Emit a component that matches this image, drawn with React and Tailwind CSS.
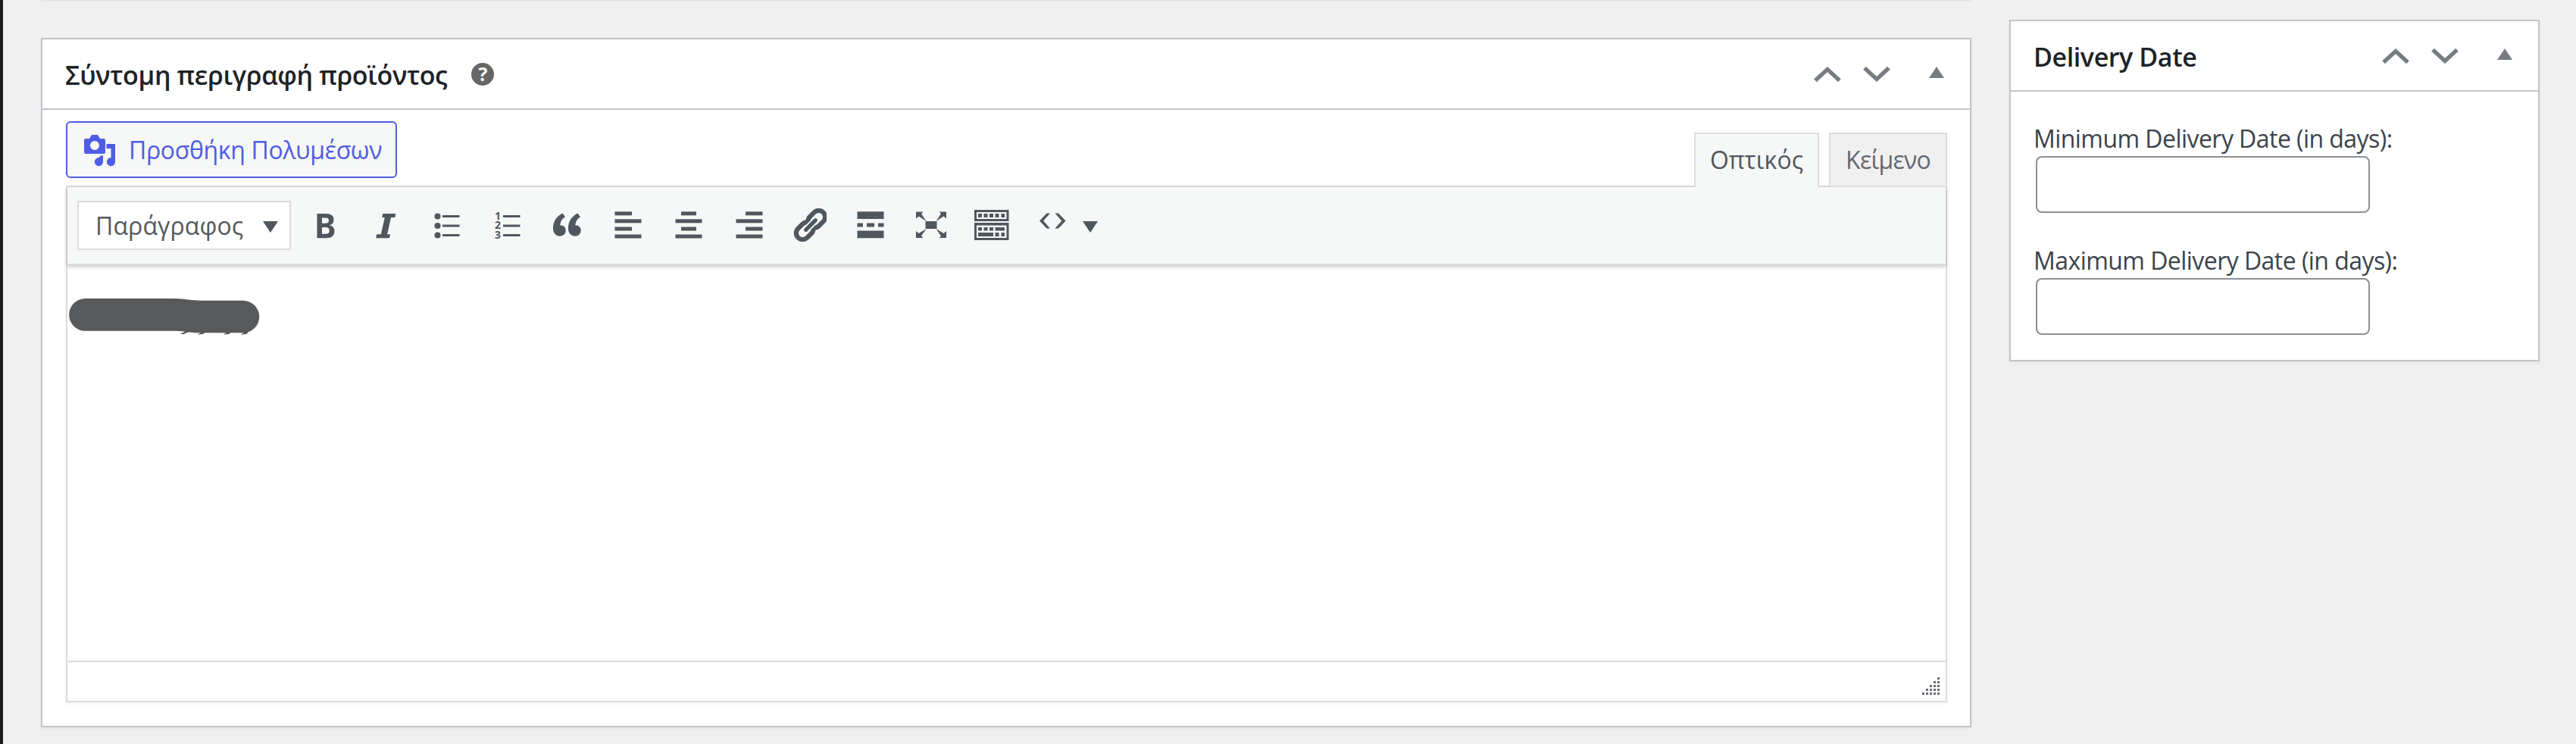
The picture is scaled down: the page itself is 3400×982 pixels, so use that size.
const font = 'font-["Open_Sans","Noto_Sans",sans-serif]';

function Sort() {
  return (
    <div className="flex items-start text-[#787c82]">
      <svg className="h-[20px] w-[36px]" viewBox="0 0 36 20" fill="none" stroke="currentColor" strokeWidth="5.4">
        <path d="M2 18.2 18 3.600 34 18.200" />
      </svg>
      <svg className="ml-[29px] h-[20px] w-[36px]" viewBox="0 0 36 20" fill="none" stroke="currentColor" strokeWidth="5.4">
        <path d="M2 1.800 18 16.400 34 1.800" />
      </svg>
      <svg className="ml-[51px] h-[15px] w-[20px]" viewBox="0 0 20 15" fill="currentColor">
        <path d="M10 0 20 15H0Z" />
      </svg>
    </div>
  );
}

function PanelHeader({ children }) {
  return (
    <div className="flex h-[93px] items-center border-b-2 border-[#c3c4c9] pr-[34px] pl-[30px] text-[#1d2327]">{children}</div>
  );
}

function Tool({ w = 44, ml = 36, children }) {
  return (
    <svg className="shrink-0" style={{ marginLeft: ml }} width={w} height="44" viewBox={`0 0 ${w} 44`} fill="currentColor">
      {children}
    </svg>
  );
}

const rows = [4.3, 14.3, 24.5, 34.5];
const quote = "M16.600 6.600 19.900 11.200C15 14.500 13.500 18 13.400 22.600C18 22 20.700 25 20.700 29.300C20.700 33.500 17.500 36.600 13 36.600C7 36.600 4 32 4 26.500C4 17.500 8.500 10.500 16.600 6.600Z";

function Align({ x, w }) {
  return rows.map((y, i) => <rect key={y} x={i % 2 ? 4.5 : x} y={y} width={i % 2 ? 35 : w} height="5" />);
}

function Toolbar() {
  return (
    <div className="relative flex h-[103px] items-start border-b-2 border-[#dcdcde] bg-[#f6f7f7] pt-[18px] pl-[13px] text-[#50575e] shadow-[0_2px_5px_rgba(0,0,0,0.22)]">
      <div className="flex h-[65px] w-[282px] items-center justify-between border-2 border-[#dcdcde] bg-white pr-[15px] pl-[22px]">
        <span className="text-[32px] leading-none tracking-[0.1px] whitespace-nowrap text-[#55595c]">Παράγραφος</span>
        <svg className="mt-[4px] h-[15px] w-[20px]" viewBox="0 0 20 15" fill="currentColor"><path d="M0 0H20L10 15Z" /></svg>
      </div>
      <div className="flex pt-[10px]">
        <Tool ml={25}><path transform="translate(0 2)" fillRule="evenodd" d="M9.500 5H20.500C28.500 5 31.500 8 31.500 13C31.500 17 29.500 19.500 26 20.200C30 21 32.500 24 32.500 28.300C32.500 34 28.500 37.300 21.500 37.300H9.500ZM16 10.500V17.800H20.500C23.500 17.800 25 16.600 25 14.100C25 11.600 23.500 10.500 20.500 10.500ZM16 23V31.700H21C24.200 31.700 25.700 30.200 25.700 27.200C25.700 24.400 24.200 23 20.800 23Z" /></Tool>
        <Tool ml={34}><path transform="translate(.8 2)" d="M17.500 5H34.500L33.500 10H28.300L23.300 32.300H27.300L26.200 37.300H8.300L9.400 32.300H15L20 10H16.400Z" /></Tool>
        <Tool>
          {[10.500, 23, 35.500].map((y) => <g key={y}><circle cx="10.500" cy={y} r="4" /><rect x="17" y={y - 1.500} width="22.500" height="3" /></g>)}
        </Tool>
        <Tool>
          {[10.500, 23, 35.500].map((y, i) => <g key={y}><text x="6" y={y + 4.300} fontSize="14" fontWeight="700">{i + 1}</text><rect x="17" y={y - 1.500} width="22.500" height="3" /></g>)}
        </Tool>
        <Tool>
          <path transform="translate(-1)" d={quote} />
          <path transform="translate(19)" d={quote} />
        </Tool>
        <Tool><Align x={4.500} w={22.500} /></Tool>
        <Tool><Align x={12} w={20} /></Tool>
        <Tool><Align x={17} w={22.500} /></Tool>
        <Tool>
          <g fill="none" stroke="currentColor" transform="rotate(-45 23 22)">
            <rect x="-.5" y="13.500" width="25" height="17" rx="8.500" strokeWidth="6.200" />
            <rect x="21.500" y="13.500" width="25" height="17" rx="8.500" strokeWidth="6.200" />
            <path d="M14 22H32" strokeWidth="9" stroke="#f6f7f7" strokeLinecap="round" />
            <path d="M14 22H32" strokeWidth="5.200" strokeLinecap="round" />
          </g>
        </Tool>
        <Tool><path d="M4.500 4.300H39.500V14H4.500ZM4.500 19.500H12V24.500H4.500ZM17 19.500H27V24.500H17ZM32 19.500H39.500V24.500H32ZM4.500 29.500H39.500V39.200H4.500Z" /></Tool>
        <Tool>
          <path d="M14.500 17H29.500V27H14.500Z" />
          <path d="M2 4.500H11.500L9 7L15.500 17L5.500 10.500L2 13.500ZM42 4.500V13.500L38.500 10.500L28.500 17L35 7L32.500 4.500ZM2 39V30L5.500 33L15.500 27L9 36.500L11.500 39ZM42 39H32.500L35 36.500L28.500 27L38.500 33L42 30Z" />
        </Tool>
        <Tool w={46} ml={35}>
          <path fillRule="evenodd" d="M0 2H45.500V17H0ZM3 5V14H42.500V5ZM0 19H45.500V42H0ZM3 22.500V39H42.500V22.500Z" />
          <path d="M5 7H10V12H5ZM12.500 7H17.500V12H12.500ZM20 7H25V12H20ZM27.500 7H32.500V12H27.500ZM35.500 7H40V12H35.500ZM5 25H10V29.500H5ZM12.500 25H17.500V29.500H12.500ZM20 25H25V29.500H20ZM27.500 25H40V29.500H27.500ZM5 32H25V37H5ZM27.500 32H32.500V37H27.500ZM35.500 32H40V37H35.500Z" />
        </Tool>
        <Tool w={36} ml={39}><path d="M10.500 6.500H15L6.200 16.500L15 26.500H10.500L1 16.500ZM21.500 6.500H26L35.500 16.500L26 26.500H21.500L30.300 16.500Z" /></Tool>
        <Tool w={20} ml={22}><path d="M0 17H20L10 32Z" /></Tool>
      </div>
    </div>
  );
}

function Field({ label }) {
  return (
    <label className="flex flex-col text-[32px] text-[#3c434a]">
      <span className="h-[46px] leading-[46px] tracking-[-0.55px] whitespace-nowrap">{label}</span>
      <input className="ml-[3px] h-[75px] w-[441px] rounded-[8px] border-2 border-[#8c8f94] bg-white" />
    </label>
  );
}

export default function App() {
  return (
    <div className={`flex h-[982px] w-[3400px] items-start overflow-hidden border-l-4 border-[#1e1b18] bg-[#f0f0f1] ${font}`}>
      <div className="ml-[50px] flex w-[2548px] flex-col">
        <div className="h-[2px] bg-[#e4e4e6]" />
        <section className="mt-[48px] h-[910px] border-2 border-[#c3c4c9] bg-white shadow-[0_2px_4px_rgba(0,0,0,0.05)]">
          <PanelHeader>
            <h2 className="pt-[3px] text-[34px] leading-none font-semibold tracking-[-0.36px] whitespace-nowrap">Σύντομη περιγραφή προϊόντος</h2>
            <span className="ml-[32px] flex size-[30px] items-center justify-center rounded-full bg-[#666] text-[25px] leading-none font-bold text-white">?</span>
            <div className="ml-auto"><Sort /></div>
          </PanelHeader>
          <div className="flex flex-col pr-[30px] pl-[31px]">
            <div className="flex h-[100px] items-start justify-between">
              <button className="mt-[15px] flex h-[75px] w-[437px] items-center rounded-[6px] border-2 border-[#4f5de4] bg-[#f6f7f7] pl-[22px] text-[#4f5de4]">
                <svg className="mt-[3px] h-[42px] w-[42px]" viewBox="0 0 42 42" fill="currentColor">
                  <path fillRule="evenodd" d="M2 5H7L10 0H18L21 5H26Q28 5 28 7V23Q28 25 26 25H2Q0 25 0 23V7Q0 5 2 5ZM14 8A6 6 0 1 0 14 20A6 6 0 1 0 14 8Z" />
                  <path d="M29.500 12H41V35A5.600 5.600 0 1 1 35.500 30V18H29.500ZM25 27V35A5.600 5.600 0 1 1 19.500 30Q21 27 25 27Z" />
                </svg>
                <span className="ml-[17px] text-[32px] leading-none tracking-[-0.35px] whitespace-nowrap">Προσθήκη Πολυμέσων</span>
              </button>
              <div className="relative z-10 mt-[30px] flex gap-[13px] text-[32px] text-[#50575e]">
                <div className="flex h-[72px] w-[165px] items-center justify-center border-2 border-b-0 border-[#dcdcde] bg-[#f6f7f7] pb-[2px]">Οπτικός</div>
                <div className="flex h-[72px] w-[156px] items-center justify-center border-2 border-[#dcdcde] bg-[#f0f0f1] pb-px tracking-[-0.8px] text-[#646970]">Κείμενο</div>
              </div>
            </div>
            <div className="flex h-[682px] flex-col border-2 border-[#dcdcde] shadow-[0_2px_4px_rgba(0,0,0,0.05)]">
              <Toolbar />
              <div className="flex-1 pt-[43px]">
                <svg className="h-[50px] w-[256px]" viewBox="0 0 256 50">
                  <path d="M149 47.500 160 43V45L153 48ZM172 48 182 44 180 47.500 174 48.500ZM206 48 216 44 214 47.500 208 48.500ZM229 48 239 44 237 47.500 231 48.500Z" fill="#444" />
                  <path d="M23.500 1H138C156 1 162 3.800 180 3.800H232A21.200 21.200 0 0 1 232 46.300H172C158 46 156 43.800 138 43.800H23.500A21.400 21.400 0 0 1 23.500 1Z" fill="#58595b" />
                </svg>
              </div>
              <div className="flex h-[53px] items-end justify-end border-t-2 border-[#dcdcde] pr-[8px] pb-[8px]">
                <svg className="h-[23px] w-[23px]" viewBox="0 0 23 23" fill="#6b6f75">
                  {[0, 1, 2, 3, 4].flatMap((r) => Array.from({ length: r + 1 }, (_, c) => <rect key={`${r}-${c}`} x={20 - c * 5} y={r * 5} width="3" height="3" />))}
                </svg>
              </div>
            </div>
          </div>
        </section>
      </div>
      <section className="mt-[26px] ml-[50px] h-[451px] w-[700px] border-2 border-[#c3c4c9] bg-white shadow-[0_2px_4px_rgba(0,0,0,0.05)]">
        <PanelHeader>
          <h2 className="pt-[3px] text-[34px] leading-none font-semibold tracking-[-0.4px] whitespace-nowrap">Delivery Date</h2>
          <div className="ml-auto"><Sort /></div>
        </PanelHeader>
        <div className="flex flex-col gap-[40px] pt-[39px] pl-[30px]">
          <Field label="Minimum Delivery Date (in days):" />
          <Field label="Maximum Delivery Date (in days):" />
        </div>
      </section>
    </div>
  );
}
